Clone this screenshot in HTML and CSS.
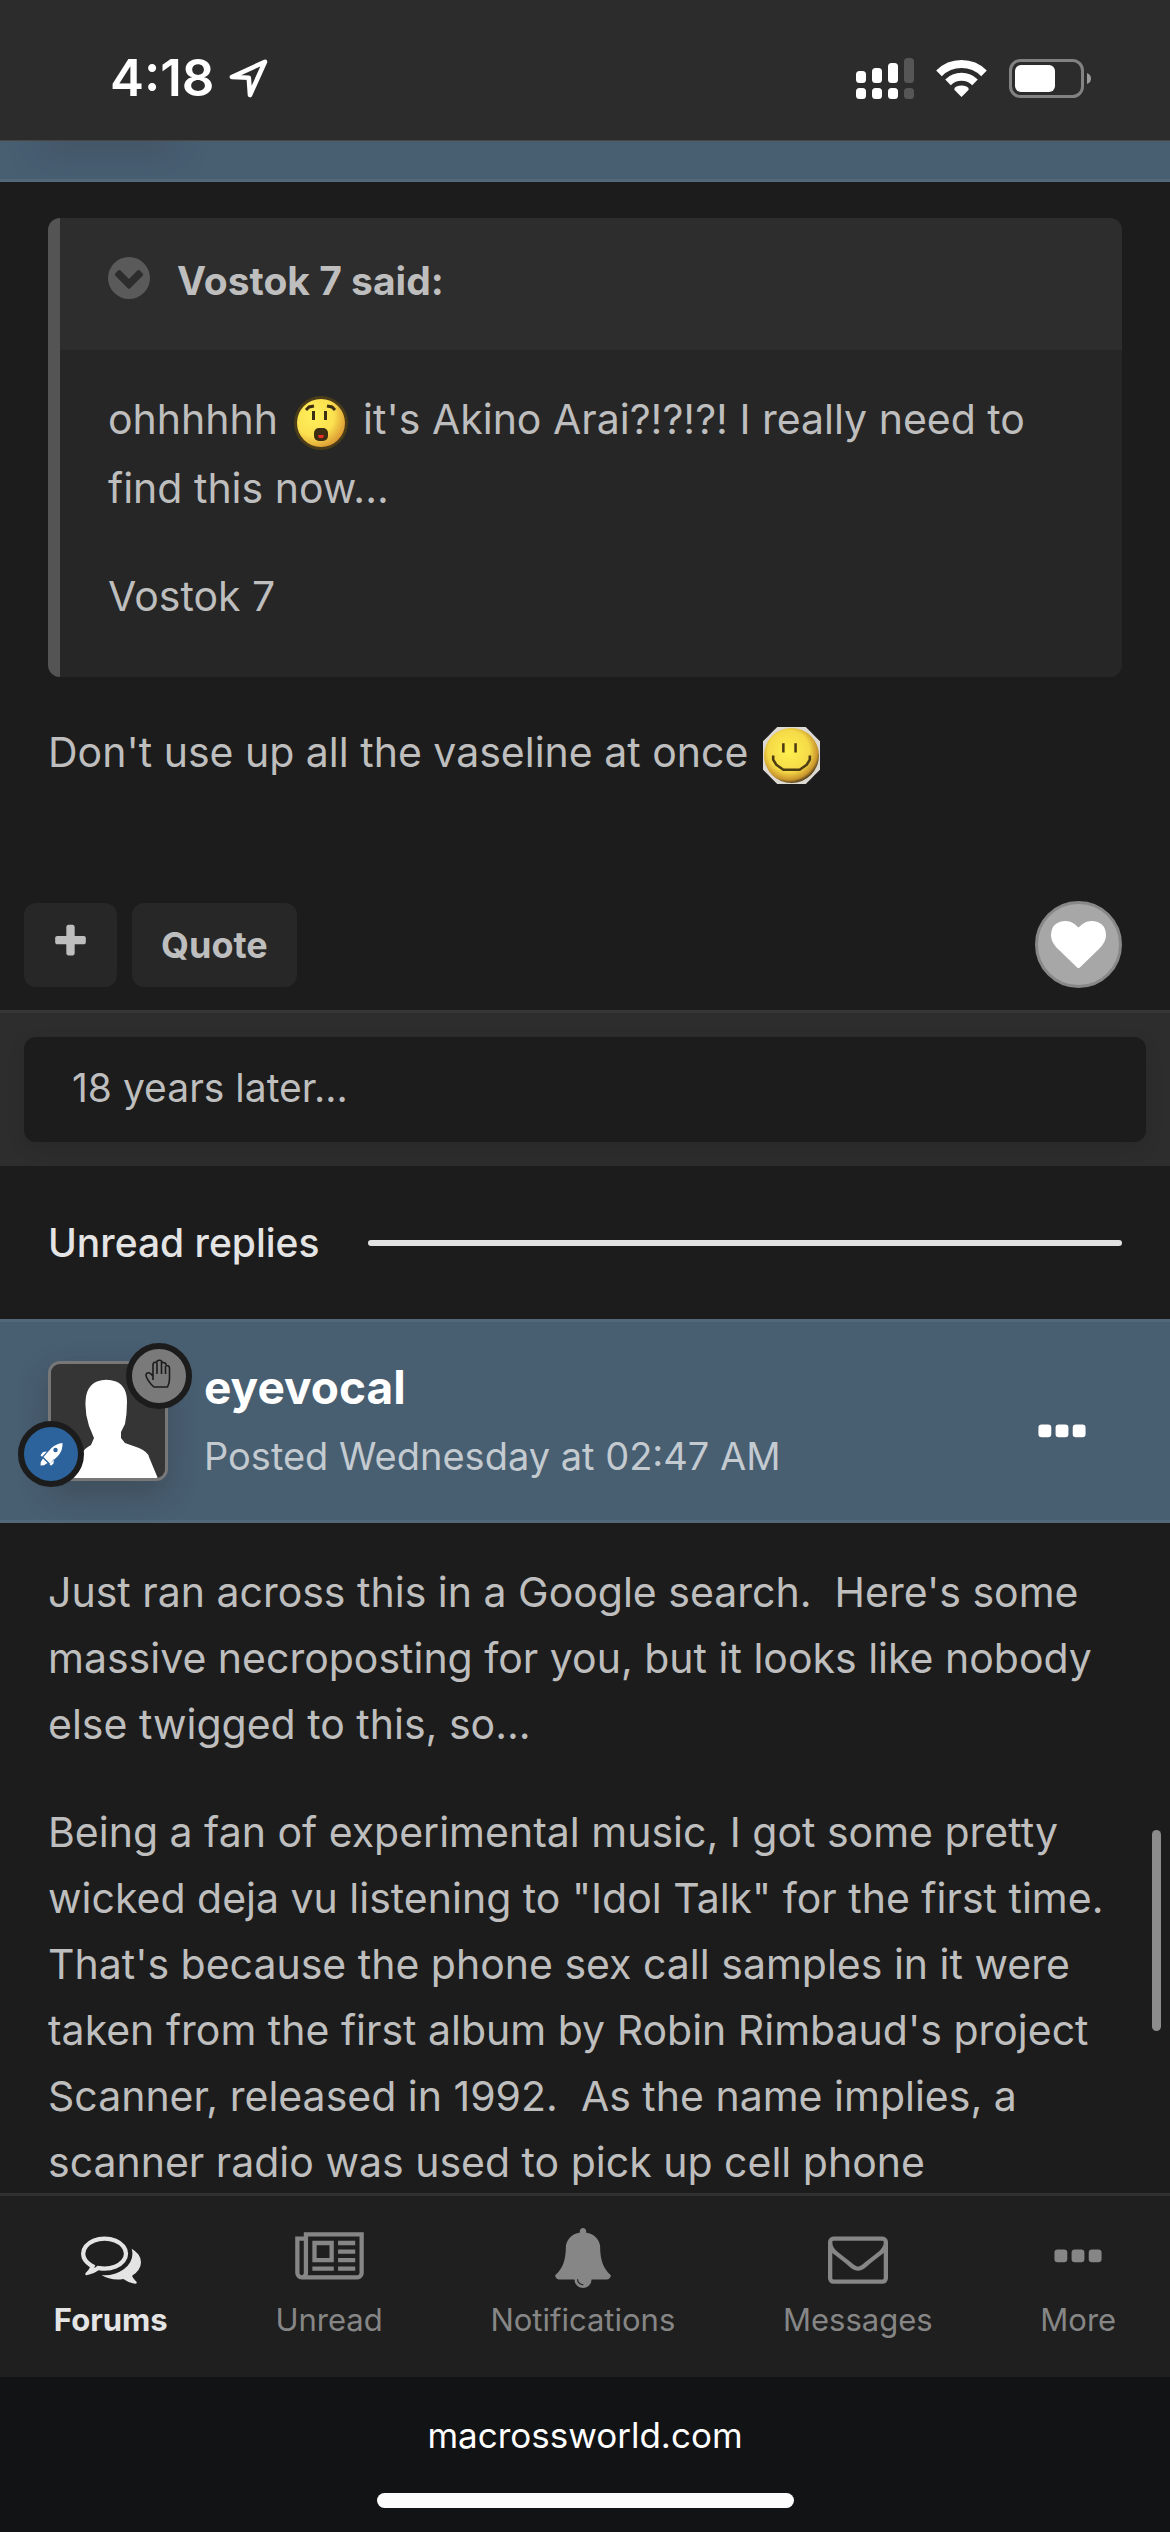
FILE: index.html
```html
<!DOCTYPE html>
<html lang="en">
<head>
<meta charset="utf-8">
<meta name="viewport" content="width=device-width, initial-scale=1">
<title>Forum topic</title>
<link rel="stylesheet" href="styles.css">
</head>
<body>
<header class="status">
  <div class="status-left">
    <span class="clock">4:18</span>
    <svg class="locate" viewBox="0 0 39 39" aria-hidden="true"><path d="M2.800 18 36 2.800 21 36 19.800 18.800Z" fill="none" stroke="#fff" stroke-width="4.600" stroke-linejoin="round"/></svg>
  </div>
  <div class="status-right">
    <svg class="signal" viewBox="0 0 58 41" aria-hidden="true">
      <g fill="#fff"><rect x="0" y="13" width="10" height="12" rx="3.500"/><rect x="16" y="10" width="10" height="15" rx="3.500"/><rect x="32" y="5" width="10" height="20" rx="3.500"/><rect x="0" y="30" width="10" height="11" rx="3.500"/><rect x="16" y="30" width="10" height="11" rx="3.500"/><rect x="32" y="30" width="10" height="11" rx="3.500"/></g>
      <g fill="#565656"><rect x="48" y="0" width="10" height="25" rx="3.500"/><rect x="48" y="30" width="10" height="11" rx="3.500"/></g>
    </svg>
    <svg class="wifi" viewBox="0 0 51 37" aria-hidden="true"><g fill="none" stroke="#fff" stroke-width="8"><path d="M3 13.300A32 32 0 0 1 48 13.300"/><path d="M12 22.300A19.500 19.500 0 0 1 39 22.300"/></g><path d="M25.500 37 18.300 29.800Q18 27.500 20.500 26.500 25.500 24.500 30.500 26.500 33 27.500 32.700 29.800Z" fill="#fff"/></svg>
    <svg class="battery" viewBox="0 0 82 39" aria-hidden="true"><rect x="1.500" y="1.500" width="72" height="36" rx="10" fill="none" stroke="#828282" stroke-width="3"/><rect x="6" y="6" width="40" height="27" rx="6" fill="#fff"/><path d="M78 14q4 1.500 4 5.500t-4 5.500z" fill="#9a9a9a"/></svg>
  </div>
</header>

<main class="page">
  <div class="prev-head"><div class="prev-shadow"></div></div>

  <article class="post">
    <blockquote class="quote">
      <header class="quote-head">
        <svg class="quote-icon" viewBox="128 128 1536 1536" aria-hidden="true"><circle cx="896" cy="896" r="768" fill="#5a5a5a"/><path fill="#2d2d2d" d="M941 1271l454-454q19-19 19-45t-19-45l-102-102q-19-19-45-19t-45 19l-307 307-307-307q-19-19-45-19t-45 19l-102 102q-19 19-19 45t19 45l454 454q19 19 45 19t45-19z"/></svg>
        <cite class="quote-by">Vostok 7 said:</cite>
      </header>
      <div class="quote-body">
        <p>ohhhhhh <svg class="smiley smiley-wow" viewBox="0 0 54 54" role="img" aria-label="surprised">
          <defs><radialGradient id="wow" cx=".35" cy=".35" r=".7"><stop offset="0" stop-color="#fff05a"/><stop offset=".6" stop-color="#fbe04f"/><stop offset="1" stop-color="#dc9a33"/></radialGradient></defs>
          <circle cx="27" cy="27" r="27" fill="#4a3c19"/><circle cx="27" cy="27" r="24" fill="url(#wow)"/>
          <path d="M12 14l3-3 5-1M33 10l5 1 3 3" fill="none" stroke="#3b2e12" stroke-width="3"/><path d="M18 15h3v9h-3zM30 15h3v9h-3z" fill="#3b2e12"/><rect x="20" y="32" width="14" height="13" rx="5" fill="#3b2e12"/><path d="M24 39h6l-1 3h-4z" fill="#ee2e24"/></svg> it's Akino Arai?!?!?! I really need to find this now...</p>
        <p>Vostok 7</p>
      </div>
    </blockquote>
    <p>Don't use up all the vaseline at once <svg class="smiley smiley-happy" viewBox="0 0 56 56" role="img" aria-label="smile">
      <defs><radialGradient id="happy" cx=".45" cy=".42" r=".58"><stop offset="0" stop-color="#fff04e"/><stop offset=".65" stop-color="#f5da48"/><stop offset=".9" stop-color="#c9952c"/><stop offset="1" stop-color="#5c461d"/></radialGradient></defs>
      <path d="M14 0h28l5 5 4 4 5 5v28l-5 5-4 4-5 5H14l-5-5-4-4-5-5V14l5-5 4-4z" fill="#dcdad3"/><circle cx="28" cy="28" r="27" fill="url(#happy)"/>
      <path d="M20 16v9M32 16v9M10 28v4l3 5 7 5h16l7-5 3-5v-4" fill="none" stroke="#4c3b13" stroke-width="2.500"/></svg></p>
  </article>

  <div class="actions">
    <button class="btn btn-icon" type="button" aria-label="Multi-quote"><svg class="plus" viewBox="0 0 1792 1792" aria-hidden="true"><path fill="currentColor" d="M1600 736v192q0 40-28 68t-68 28h-416v416q0 40-28 68t-68 28h-192q-40 0-68-28t-28-68v-416h-416q-40 0-68-28t-28-68v-192q0-40 28-68t68-28h416v-416q0-40 28-68t68-28h192q40 0 68 28t28 68v416h416q40 0 68 28t28 68z"/></svg></button>
    <button class="btn" type="button">Quote</button>
    <button class="like" type="button" aria-label="Like"><svg class="heart" viewBox="0 0 1792 1792" aria-hidden="true"><path fill="#fff" d="M896 1664q-26 0-44-18l-624-602q-10-8-27.500-26t-55.500-65.500-68-97.500-53.500-121-23.500-138q0-220 127-344t351-124q62 0 126.500 21.500t120 58 95.500 68.500 76 68q36-36 76-68t95.500-68.500 120-58 126.500-21.500q224 0 351 124t127 344q0 221-229 450l-623 600q-18 18-44 18z"/></svg></button>
  </div>

  <div class="gap-row"><p class="gap-note">18 years later...</p></div>

  <div class="unread"><span>Unread replies</span><span class="rule"></span></div>

  <header class="post-head">
    <div class="avatar">
      <svg class="avatar-pic" viewBox="0 0 114 114" aria-hidden="true"><rect width="114" height="114" fill="#353535"/><path fill="#fff" d="M20 117 31 89Q34 84 40 81L43 74 38 62Q34 50 34.500 38 35 22 46 17.500 55 14 65 17.500 76 22 76 38 76 50 74 60L70 68V74L74 79 88 84Q97 88 98 93L108 117Z"/></svg>
      <span class="badge badge-hand"><svg viewBox="0 0 54 54" aria-hidden="true"><path d="M21 31V15.500q.5-3 3.500-2 .5-2.500 3-2.300t2.700 2.300q3.800-.5 4 3 3.300-.3 3.300 3V30q0 4-2 8H22q-5-4-8-11-.3-3.500 3-3.200 2.500.8 4 3.700M25 14v11M29.500 13v12M33.500 17v8" fill="none" stroke="#1c1c1c" stroke-width="1.600" stroke-linejoin="round"/></svg></span>
      <span class="badge badge-rocket"><svg viewBox="0 0 54 54" aria-hidden="true"><path fill="#fff" d="M38.500 16q.6 7-4.500 13l-8 7.500-6.500-6.500 7.500-8.500q5-5 11.500-5.500zM23 24.500l-5 5.200-1.500-1.500 2.500-3.200zM30 32l-4.500 5 1.500 1.800 2.500-2.300zM19 31.500l4.500 4.500-3.500 2.200-3.500.3.300-3.500z"/><circle cx="31.500" cy="23" r="2.200" fill="#2c639c"/></svg></span>
    </div>
    <div class="who">
      <a class="name" href="#">eyevocal</a>
      <a class="posted" href="#">Posted Wednesday at 02:47 AM</a>
    </div>
    <button class="more" type="button" aria-label="Post options"><svg class="fa" viewBox="0 0 1792 1792" aria-hidden="true"><g fill="currentColor"><rect x="192" y="640" width="384" height="384" rx="96"/><rect x="704" y="640" width="384" height="384" rx="96"/><rect x="1216" y="640" width="384" height="384" rx="96"/></g></svg></button>
  </header>

  <article class="post post-text">
    <p>Just ran across this in a Google search.&nbsp; Here's some massive necroposting for you, but it looks like nobody else twigged to this, so...</p>
    <p>Being a fan of experimental music, I got some pretty wicked deja vu listening to "Idol Talk" for the first time. That's because the phone sex call samples in it were taken from the first album by Robin Rimbaud's project Scanner, released in 1992.&nbsp; As the name implies, a scanner radio was used to pick up cell phone</p>
  </article>
  <div class="scroll-thumb"></div>
</main>

<nav class="tabs">
  <a class="tab active" href="#"><svg class="fa" viewBox="0 0 1792 1792" aria-hidden="true"><path fill="currentColor" d="M704 384q-153 0-286 52t-211.500 141-78.500 191q0 82 53 158t149 132l97 56-35 84q34-20 62-39l44-31 53 10q78 14 153 14 153 0 286-52t211.500-141 78.500-191-78.500-191-211.500-141-286-52zm0-128q191 0 353.500 68.500t256.500 186.500 94 257-94 257-256.500 186.500-353.500 68.500q-86 0-176-16-124 88-278 128-36 9-86 16h-3q-11 0-20.500-8t-11.500-21q-1-3-1-6.500t.5-6.500 2-6l2.500-5 3.500-5.500 4-5 4.500-5 4-4.500q5-6 23-25t26-29.500 22.500-29 25-38.500 20.500-44q-124-72-195-177t-71-224q0-139 94-257t256.500-186.500 353.500-68.500zm822 1169q10 24 20.500 44t25 38.500 22.500 29 26 29.500 23 25q1 1 4 4.500t4.500 5 4 5 3.500 5.500l2.500 5 2 6 .5 6.500-1 6.500q-3 14-13 22t-22 7q-50-7-86-16-154-40-278-128-90 16-176 16-271 0-472-132 58 4 88 4 161 0 309-45t264-129q125-92 192-212t67-254q0-77-23-152 129 71 204 178t75 230q0 120-71 224.500t-195 176.500z"/></svg>Forums</a>
  <a class="tab" href="#"><svg class="fa fa-wide" viewBox="0 0 2048 1792" aria-hidden="true"><path fill="currentColor" d="M1024 512h-384v384h384v-384zm128 640v128h-640v-128h640zm0-768v640h-640v-640h640zm640 768v128h-512v-128h512zm0-256v128h-512v-128h512zm0-256v128h-512v-128h512zm0-256v128h-512v-128h512zm-1536 960v-960h-128v960q0 26 19 45t45 19 45-19 19-45zm1664 0v-1088h-1536v1088q0 33-11 64h1483q26 0 45-19t19-45zm128-1216v1216q0 80-56 136t-136 56h-1664q-80 0-136-56t-56-136v-1088h256v-128h1792z"/></svg>Unread</a>
  <a class="tab" href="#"><svg class="fa" viewBox="0 0 1792 1792" aria-hidden="true"><path fill="currentColor" d="M912 1696q0-16-16-16-59 0-101.500-42.500t-42.500-101.500q0-16-16-16t-16 16q0 73 51.500 124.500t124.500 51.500q16 0 16-16zm816-288q0 52-38 90t-90 38h-448q0 106-75 181t-181 75-181-75-75-181h-448q-52 0-90-38t-38-90q50-42 91-88t85-119.500 74.500-158.500 50-206 19.500-260q0-152 117-282.500t307-158.500q-8-19-8-39 0-40 28-68t68-28 68 28 28 68q0 20-8 39 190 28 307 158.500t117 282.500q0 139 19.500 260t50 206 74.500 158.500 85 119.500 91 88z"/></svg>Notifications</a>
  <a class="tab" href="#"><svg class="fa" viewBox="0 0 1792 1792" aria-hidden="true"><path fill="currentColor" d="M1664 1504v-768q-32 36-69 66-268 206-426 338-51 43-83 67t-86.500 48.500-102.500 24.500h-2q-48 0-102.500-24.500t-86.500-48.500-83-67q-158-132-426-338-37-30-69-66v768q0 13 9.500 22.500t22.500 9.500h1472q13 0 22.500-9.500t9.500-22.500zm0-1051v-24.500l-.5-13-3-12.500-5.500-9-9-7.500-14-2.500h-1472q-13 0-22.500 9.500t-9.500 22.500q0 168 147 284 193 152 401 317 6 5 35 29.500t46 37.500 44.500 31.500 50.500 27.500 43 9h2q20 0 43-9t50.500-27.500 44.500-31.500 46-37.500 35-29.500q208-165 401-317 54-43 100.500-115.500t46.500-131.500zm128-37v1088q0 66-47 113t-113 47h-1472q-66 0-113-47t-47-113v-1088q0-66 47-113t113-47h1472q66 0 113 47t47 113z"/></svg>Messages</a>
  <a class="tab" href="#"><svg class="fa" viewBox="0 0 1792 1792" aria-hidden="true"><g fill="currentColor"><rect x="192" y="640" width="384" height="384" rx="96"/><rect x="704" y="640" width="384" height="384" rx="96"/><rect x="1216" y="640" width="384" height="384" rx="96"/></g></svg>More</a>
</nav>

<footer class="browser-bar">
  <span class="url">macrossworld.com</span>
  <span class="home"></span>
</footer>
</body>
</html>
```
FILE: styles.css
```css
* { box-sizing: border-box; }

body {
  margin: 0;
  height: 100vh;
  display: flex;
  flex-direction: column;
  background: #1c1c1c;
  color: #bebebe;
  font-family: Inter, "Liberation Sans", sans-serif;
  font-optical-sizing: none;
  font-size: 41px;
  line-height: 66px;
  overflow: hidden;
}

a { color: inherit; text-decoration: none; }
p { margin: 0; }
svg { display: block; flex: none; }

button {
  border: 0;
  padding: 0;
  background: none;
  color: inherit;
  font: inherit;
}

/* Status bar */
.status {
  flex: none;
  display: flex;
  justify-content: space-between;
  align-items: center;
  height: 141px;
  padding: 16px 79px 0 110px;
  background: #2c2c2c;
  border-bottom: 1px solid #4a4644;
  color: #fff;
}
.status-left { display: flex; align-items: center; gap: 15px; }
.status-right { display: flex; align-items: center; gap: 22px; }
.clock { font-size: 51px; font-weight: 600; }
.locate { width: 39px; height: 39px; }
.signal { width: 58px; height: 41px; }
.wifi { width: 51px; height: 37px; }
.battery { width: 82px; height: 39px; }

/* Topic */
.page {
  flex: 1;
  min-height: 0;
  position: relative;
  overflow: hidden;
}
.prev-head {
  height: 41px;
  padding: 0 48px;
  overflow: hidden;
  background: #485e71;
  border-bottom: 3px solid #526879;
}
.prev-shadow {
  width: 120px;
  height: 1px;
  margin-top: -1px;
  box-shadow: 0 0 30px 6px rgba(50, 60, 70, 0.5);
}

.post {
  display: flex;
  flex-direction: column;
  gap: 42px;
  padding: 36px 48px 0;
}

.quote {
  margin: 0;
  overflow: hidden;
  background: #262626;
  border-left: 12px solid #545454;
  border-radius: 12px;
}
.quote-head {
  display: flex;
  align-items: center;
  gap: 27px;
  height: 132px;
  padding: 0 48px 6px;
  background: #2d2d2d;
}
.quote-icon { width: 42px; height: 42px; margin-bottom: 6px; }
.quote-by { font-size: 39px; font-style: normal; font-weight: 700; }
.quote-body {
  display: flex;
  flex-direction: column;
  gap: 42px;
  padding: 36px 48px 48px;
}

.smiley { display: inline-block; }
.smiley-wow { width: 54px; height: 54px; margin: 0 4px 5px; vertical-align: -21px; }
.smiley-happy { width: 57px; height: 57px; margin: 0 0 2px 3px; vertical-align: -19px; }

.actions {
  display: flex;
  align-items: center;
  gap: 15px;
  padding: 115px 48px 22px 24px;
}
.btn {
  height: 84px;
  padding: 0 29px;
  border-radius: 12px;
  background: #272727;
  font-size: 36px;
  font-weight: 700;
}
.btn-icon { padding: 0 27px; }
.plus { width: 39px; height: 39px; margin-bottom: 6px; }
.like {
  display: flex;
  align-items: center;
  justify-content: center;
  width: 87px;
  height: 87px;
  margin-left: auto;
  border: 3px solid #888;
  border-radius: 50%;
  background: #a7a7a7;
}
.heart { width: 55px; height: 55px; }

.gap-row {
  padding: 24px;
  background: #2d2d2d;
  border-top: 3px solid #363636;
}
.gap-note {
  padding: 18px 48px 21px;
  border-radius: 12px;
  background: #1c1c1c;
  box-shadow: 0 6px 18px rgba(0, 0, 0, 0.1);
  font-size: 39px;
}

.unread {
  display: flex;
  align-items: center;
  gap: 48px;
  height: 153px;
  padding: 0 48px;
  color: #e4e4e4;
  font-size: 39px;
  font-weight: 500;
}
.rule { flex: 1; height: 6px; border-radius: 3px; background: #e2e2e2; }

/* Post header */
.post-head {
  display: flex;
  align-items: center;
  gap: 36px;
  height: 204px;
  padding: 0 78px 0 48px;
  background: #485e71;
  border-top: 3px solid #526879;
  border-bottom: 3px solid #526879;
}
.avatar {
  position: relative;
  width: 120px;
  height: 120px;
  border-radius: 12px;
  box-shadow: 0 12px 30px rgba(40, 40, 40, 0.3);
}
.avatar-pic {
  width: 120px;
  height: 120px;
  border: 3px solid #777;
  border-radius: 12px;
}
.badge {
  position: absolute;
  width: 66px;
  height: 66px;
  border: 6px solid #1c1c1c;
  border-radius: 50%;
}
.badge-hand { right: -24px; top: -18px; background: #7a7a7a; }
.badge-rocket { left: -30px; bottom: -6px; background: #2c639c; }
.who { display: flex; flex-direction: column; gap: 3px; }
.name { color: #fff; font-size: 46px; font-weight: 700; }
.posted { color: #c3cad0; font-size: 38px; }
.more { margin-left: auto; padding-top: 24px; color: #fff; }
.fa { width: 60px; height: 60px; }
.fa-wide { width: 69px; }

.scroll-thumb {
  position: absolute;
  right: 9px;
  top: 1689px;
  width: 9px;
  height: 201px;
  border-radius: 5px;
  background: #8c8c8c;
}

/* Bottom tabs */
.tabs {
  flex: none;
  display: flex;
  justify-content: space-around;
  height: 184px;
  padding-top: 32px;
  background: #1f1f1f;
  border-top: 3px solid #303030;
  color: #868686;
}
.tab {
  display: flex;
  flex-direction: column;
  align-items: center;
  gap: 14px;
  font-size: 31px;
  line-height: 36px;
}
.active { color: #e4e4e4; font-weight: 700; }

.browser-bar {
  flex: none;
  display: flex;
  flex-direction: column;
  align-items: center;
  gap: 34px;
  height: 155px;
  padding-top: 34px;
  background: #111315;
  color: #fff;
}
.url { font-size: 35px; line-height: 48px; }
.home { width: 417px; height: 15px; border-radius: 8px; background: #fcfcfc; }
```
